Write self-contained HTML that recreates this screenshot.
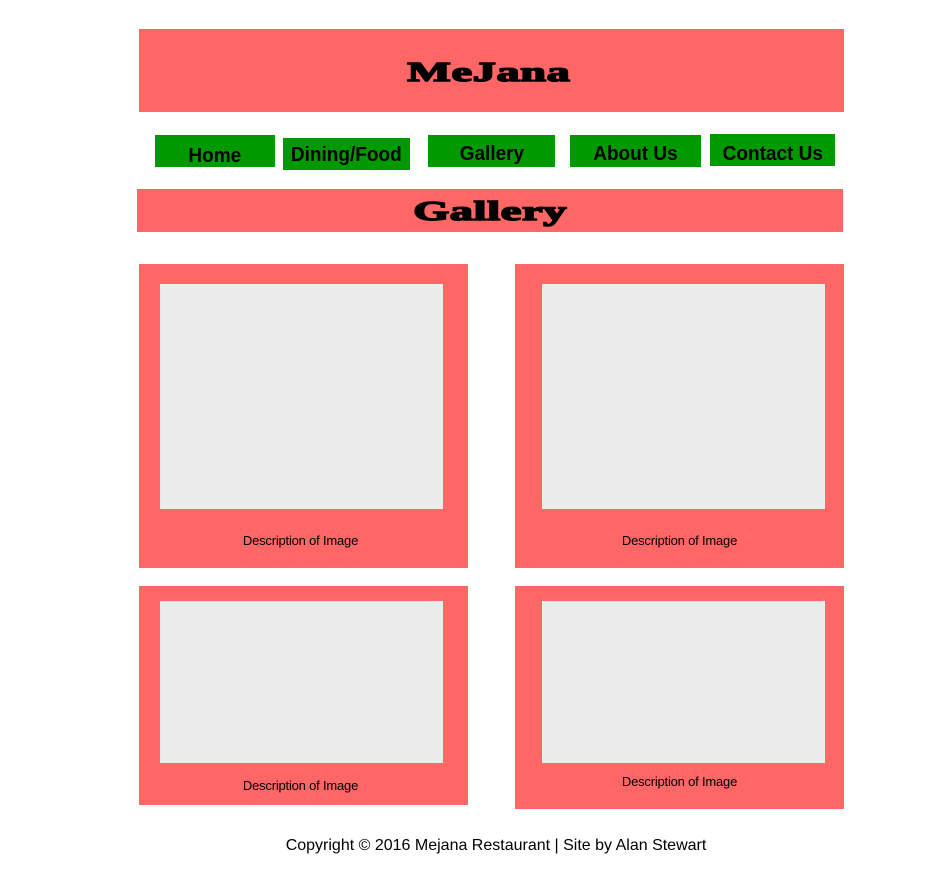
<!DOCTYPE html>
<html><head><meta charset="utf-8"><style>
body{margin:0;background:#fff;width:949px;height:876px;position:relative;font-family:"Liberation Sans",sans-serif;overflow:hidden}
.a{position:absolute}
.r{background:#ff6666}
.g{background:#009900;color:#000;font-weight:bold;font-size:20px;text-align:center;line-height:36px}
.g span{display:inline-block;transform:scaleX(0.95)}
.im{background:#ececec;position:absolute}
.cap{position:absolute;font-size:13px;width:100%;text-align:center;left:0;letter-spacing:-0.2px}
.t{font-family:"Liberation Serif",serif;font-weight:900;color:#000;position:absolute;width:100%;text-align:center;left:0}
.t span{display:inline-block;transform:scaleX(1.7);-webkit-text-stroke:1.5px #000;letter-spacing:0.5px}
</style></head><body>
<div class="a r" style="left:139px;top:29px;width:705px;height:83px"><div class="t" style="top:28px;font-size:27px;left:-3px"><span>MeJana</span></div></div>
<div class="a g" style="left:155px;top:135px;width:120px;height:32px;line-height:42px"><span>Home</span></div>
<div class="a g" style="left:283px;top:138px;width:127px;height:32px;line-height:35px"><span>Dining/Food</span></div>
<div class="a g" style="left:428px;top:135px;width:127px;height:32px;line-height:39px"><span>Gallery</span></div>
<div class="a g" style="left:570px;top:135px;width:131px;height:32px;line-height:39px"><span>About Us</span></div>
<div class="a g" style="left:710px;top:134px;width:125px;height:32px;line-height:41px"><span>Contact Us</span></div>
<div class="a r" style="left:137px;top:189px;width:706px;height:43px"><div class="t" style="top:7px;font-size:27px"><span>Gallery</span></div></div>
<div class="a r" style="left:139px;top:264px;width:329px;height:304px"><div class="im" style="left:21px;top:20px;width:283px;height:225px"></div><div class="cap" style="top:269px;left:-3px">Description of Image</div></div>
<div class="a r" style="left:515px;top:264px;width:329px;height:304px"><div class="im" style="left:27px;top:20px;width:283px;height:225px"></div><div class="cap" style="top:269px">Description of Image</div></div>
<div class="a r" style="left:139px;top:586px;width:329px;height:219px"><div class="im" style="left:21px;top:15px;width:283px;height:162px"></div><div class="cap" style="top:192px;left:-3px">Description of Image</div></div>
<div class="a r" style="left:515px;top:586px;width:329px;height:223px"><div class="im" style="left:27px;top:15px;width:283px;height:162px"></div><div class="cap" style="top:188px">Description of Image</div></div>
<div class="a" style="left:0;top:837px;width:992px;text-align:center;font-size:16px">Copyright © 2016 Mejana Restaurant | Site by Alan Stewart</div>
</body></html>
